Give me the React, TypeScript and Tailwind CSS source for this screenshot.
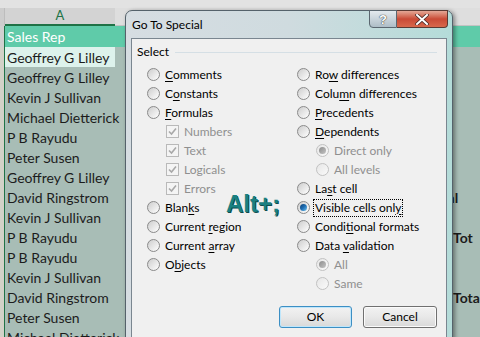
import React from 'react';

type Opt = {
    label: React.ReactNode;
    kind: 'radio' | 'check';
    sub?: boolean;
    checked?: boolean;
    disabled?: boolean;
    focus?: boolean;
};

const u = (c: string) => <span className="underline underline-offset-[2px]">{c}</span>;

const leftOpts: Opt[] = [
    { label: <>{u('C')}omments</>, kind: 'radio' },
    { label: <>C{u('o')}nstants</>, kind: 'radio' },
    { label: <>{u('F')}ormulas</>, kind: 'radio' },
    { label: 'Numbers', kind: 'check', sub: true, checked: true, disabled: true },
    { label: 'Text', kind: 'check', sub: true, checked: true, disabled: true },
    { label: 'Logicals', kind: 'check', sub: true, checked: true, disabled: true },
    { label: 'Errors', kind: 'check', sub: true, checked: true, disabled: true },
    { label: <>Blan{u('k')}s</>, kind: 'radio' },
    { label: <>Current {u('r')}egion</>, kind: 'radio' },
    { label: <>Current {u('a')}rray</>, kind: 'radio' },
    { label: <>O{u('b')}jects</>, kind: 'radio' },
];

const rightOpts: Opt[] = [
    { label: <>Ro{u('w')} differences</>, kind: 'radio' },
    { label: <>Colu{u('m')}n differences</>, kind: 'radio' },
    { label: <>{u('P')}recedents</>, kind: 'radio' },
    { label: <>{u('D')}ependents</>, kind: 'radio' },
    { label: 'Direct only', kind: 'radio', sub: true, checked: true, disabled: true },
    { label: 'All levels', kind: 'radio', sub: true, disabled: true },
    { label: <>La{u('s')}t cell</>, kind: 'radio' },
    { label: <>Visible cells onl{u('y')}</>, kind: 'radio', checked: true, focus: true },
    { label: <>Condi{u('t')}ional formats</>, kind: 'radio' },
    { label: <>Data {u('v')}alidation</>, kind: 'radio' },
    { label: 'All', kind: 'radio', sub: true, checked: true, disabled: true },
    { label: 'Same', kind: 'radio', sub: true, disabled: true },
];

const reps = [
    'Geoffrey G Lilley',
    'Geoffrey G Lilley',
    'Kevin J Sullivan',
    'Michael Dietterick',
    'P B Rayudu',
    'Peter Susen',
    'Geoffrey G Lilley',
    'David Ringstrom',
    'Kevin J Sullivan',
    'P B Rayudu',
    'P B Rayudu',
    'Kevin J Sullivan',
    'David Ringstrom',
    'Peter Susen',
    'Michael Dietterick',
];

const totals: Record<number, string> = { 7: 'Subtotal', 9: 'Tot', 12: 'Total' };

function Radio({ checked, disabled }: { checked?: boolean; disabled?: boolean }) {
    return (
        <span
            className={`flex h-[13px] w-[13px] shrink-0 items-center justify-center rounded-full border ${
                disabled
                    ? 'border-[#c2c2c2] bg-linear-to-br from-[#e6e6e6] to-[#fafafa]'
                    : 'border-[#8a8a8a] bg-linear-to-br from-[#cdcdcd] to-[#ffffff]'
            }`}
        >
            {checked && (
                <span
                    className={`h-[7px] w-[7px] rounded-full ${
                        disabled
                            ? 'bg-linear-to-br from-[#8c8c8c] to-[#c4c4c4]'
                            : 'bg-linear-to-br from-[#0b3f73] via-[#1f6fb4] to-[#6cc4f0]'
                    }`}
                />
            )}
        </span>
    );
}

function Check() {
    return (
        <span className="flex h-[13px] w-[13px] shrink-0 items-center justify-center border border-[#b9b9b9] bg-[#f4f4f4]">
            <svg width="9" height="9" viewBox="0 0 9 9">
                <path d="M1 4.5 L3.5 7 L8 1.5" fill="none" stroke="#a8a8a8" strokeWidth="1.6" />
            </svg>
        </span>
    );
}

function Option({ o }: { o: Opt }) {
    return (
        <div className={`flex h-[19px] items-center ${o.sub ? 'pl-[19px]' : ''}`}>
            {o.kind === 'radio' ? <Radio checked={o.checked} disabled={o.disabled} /> : <Check />}
            <span
                className={`ml-[4px] whitespace-nowrap px-[1px] leading-[16px] ${
                    o.disabled ? 'text-[#8f8f8f]' : 'text-black'
                } ${o.focus ? 'outline outline-1 outline-dotted outline-black' : ''}`}
            >
                {o.label}
            </span>
        </div>
    );
}

function Dialog() {
    return (
        <div className="absolute left-[125px] top-[10px] flex h-[340px] w-[328px] flex-col rounded-t-[7px] border border-[#55626b] bg-linear-to-r from-[#d6dde2] via-[#cfdbdf] to-[#b4dcd9] px-[5px] shadow-[2px_1px_4px_rgba(0,0,0,0.4)]">
            <div className="relative flex h-[27px] items-center">
                <span className="pl-[1px] text-[12px] text-black">Go To Special</span>
                <div className="absolute right-[-1px] top-[-1px] flex">
                    <div className="flex h-[18px] w-[28px] items-center justify-center rounded-bl-[4px] border border-[#5b6770] bg-linear-to-b from-[#e4eaee] via-[#c9d4db] to-[#aebdc6]">
                        <span className="text-[13px] font-bold leading-none text-white [font-family:'Liberation_Sans',sans-serif] [text-shadow:0_0_1px_#333,0_0_1px_#333]">
                            ?
                        </span>
                    </div>
                    <div className="flex h-[18px] w-[51px] items-center justify-center rounded-br-[4px] border border-l-0 border-[#5b3a33] bg-linear-to-b from-[#e3a796] via-[#c94a36] to-[#d8684c]">
                        <svg width="14" height="11" viewBox="0 0 14 11">
                            <path d="M2 1 L12 10 M12 1 L2 10" stroke="#4a2a26" strokeWidth="3.6" strokeLinecap="square" />
                            <path d="M2 1 L12 10 M12 1 L2 10" stroke="#ffffff" strokeWidth="2" strokeLinecap="square" />
                        </svg>
                    </div>
                </div>
            </div>
            <div className="flex flex-1 flex-col border border-[#7a8690] bg-[#f0f0f0] text-[12px]">
                <div className="flex h-[16px] items-center pl-[5px] pr-[9px] mt-[5px]">
                    <span className="leading-[16px]">Select</span>
                    <span className="ml-[6px] h-px flex-1 bg-[#d5dfe5]" />
                </div>
                <div className="mt-[5px] grid grid-cols-[150px_1fr] pl-[15px]">
                    <div className="flex flex-col">
                        {leftOpts.map((o, i) => (
                            <Option key={i} o={o} />
                        ))}
                    </div>
                    <div className="flex flex-col">
                        {rightOpts.map((o, i) => (
                            <Option key={i} o={o} />
                        ))}
                    </div>
                </div>
                <div className="mt-[13px] flex justify-end gap-[11px] pr-[9px]">
                    <button className="h-[22px] w-[73px] rounded-[3px] border border-[#3c8fc4] bg-linear-to-b from-[#f2f2f2] via-[#e8e8e8] to-[#d9d9d9] text-[12px] shadow-[inset_0_0_0_1px_#bfe6fb]">
                        OK
                    </button>
                    <button className="h-[22px] w-[74px] rounded-[3px] border border-[#707070] bg-linear-to-b from-[#f2f2f2] via-[#e8e8e8] to-[#d9d9d9] text-[12px] shadow-[inset_0_0_0_1px_#fbfbfb]">
                        Cancel
                    </button>
                </div>
            </div>
        </div>
    );
}

export default function App() {
    return (
        <div className="relative h-[337px] w-[480px] overflow-hidden bg-[#a8bdb6] [font-family:Lato,'Noto_Sans',sans-serif]">
            <div className="h-[8px] bg-[#e2e2e2]" />
            <div className="flex h-[18px]">
                <div className="w-[5px] bg-[#cdcdcd] border-r border-[#bdbdbd]" />
                <div className="flex w-[110px] items-center justify-center border-b-2 border-[#1f7246] bg-[#d3d3d3] text-[13px] text-[#217346]">
                    A
                </div>
                <div className="flex-1 border-b border-[#c3c3c3] bg-[#dedede]" />
            </div>
            <div className="flex h-[21px] bg-[#5fcba9]">
                <div className="w-[5px] bg-[#d0d0d0] border-r border-[#1f7246]" />
                <div className="flex w-[110px] items-center pl-[2px] text-[14px] text-white">Sales Rep</div>
            </div>
            {reps.map((r, i) => (
                <div key={i} className="flex h-[20px]">
                    <div className="w-[5px] bg-[#d2d2c8] border-r border-[#1f7246]" />
                    <div
                        className={`flex w-[110px] items-center whitespace-nowrap pl-[2px] text-[14px] text-[#1c1c1c] ${
                            i === 0 ? 'bg-[#ddf2ec]' : ''
                        }`}
                    >
                        {r}
                    </div>
                    <div className="w-[337px]" />
                    <div className="flex w-[28px] items-center justify-start overflow-visible">
                        {totals[i] && (
                            <span
                                className={`whitespace-nowrap text-[14px] font-bold text-[#1c1c1c] ${
                                    i === 7 ? 'ml-[-46px]' : 'ml-[1px]'
                                }`}
                            >
                                {totals[i]}
                            </span>
                        )}
                    </div>
                </div>
            ))}
            <Dialog />
            <div className="absolute left-[226px] top-[186px] text-[24px] font-bold text-[#1a8081] [font-family:'Liberation_Sans',sans-serif] [text-shadow:1px_1px_0_#0c4c4d]">
                Alt+;
            </div>
        </div>
    );
}
